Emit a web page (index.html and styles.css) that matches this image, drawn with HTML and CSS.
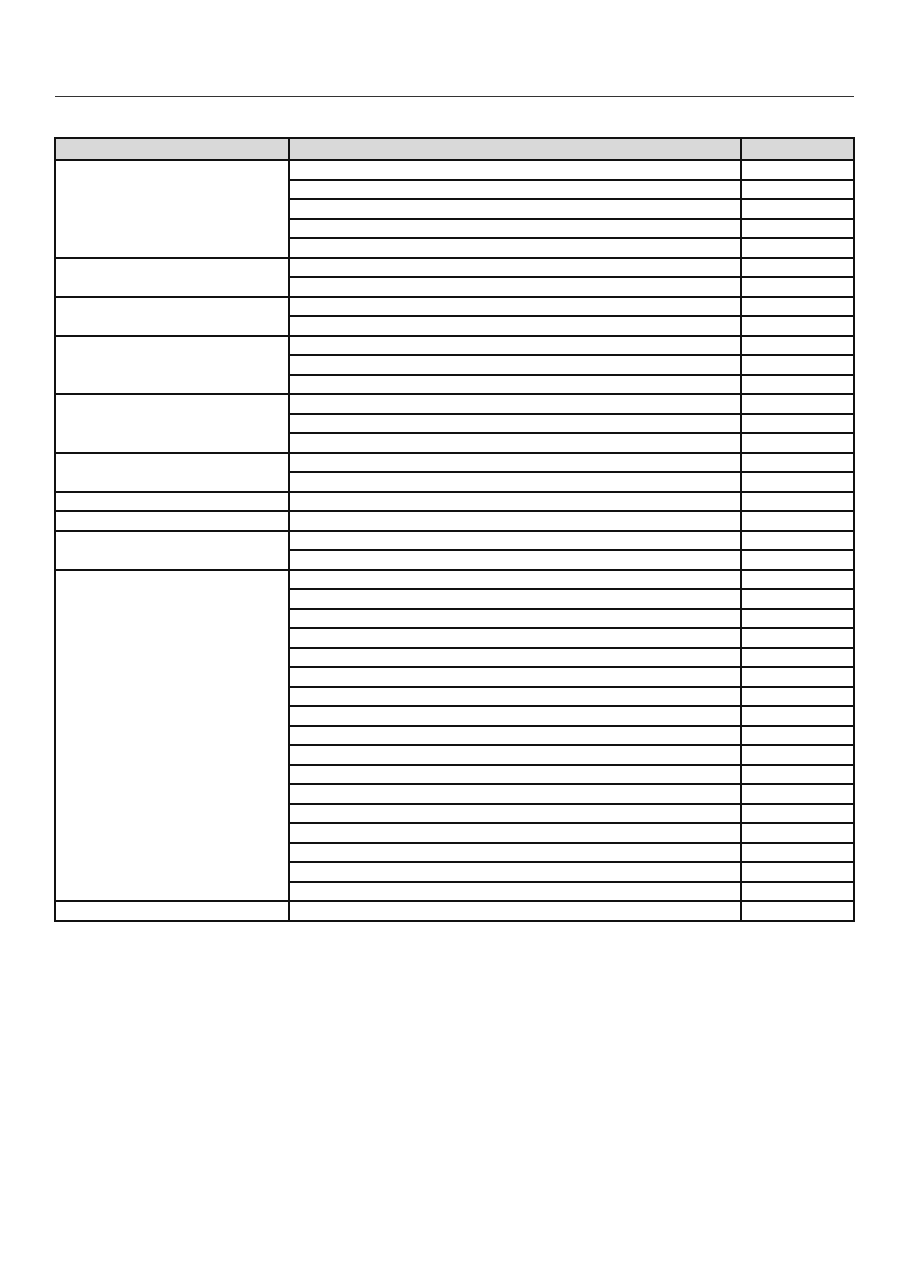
FILE: index.html
```html
<!DOCTYPE html>
<html>
<head>
<meta charset="utf-8">
<link rel="stylesheet" href="styles.css">
</head>
<body>
<div class="page">
  <div class="rule"></div>
  <table class="grid">
    <colgroup><col class="c1"><col class="c2"><col class="c3"></colgroup>
    <thead><tr class="head"><th></th><th></th><th></th></tr></thead>
    <tbody>
      <tr><td rowspan="5"></td><td></td><td></td></tr>
      <tr><td></td><td></td></tr>
      <tr><td></td><td></td></tr>
      <tr><td></td><td></td></tr>
      <tr><td></td><td></td></tr>
      <tr><td rowspan="2"></td><td></td><td></td></tr>
      <tr><td></td><td></td></tr>
      <tr><td rowspan="2"></td><td></td><td></td></tr>
      <tr><td></td><td></td></tr>
      <tr><td rowspan="3"></td><td></td><td></td></tr>
      <tr><td></td><td></td></tr>
      <tr><td></td><td></td></tr>
      <tr><td rowspan="3"></td><td></td><td></td></tr>
      <tr><td></td><td></td></tr>
      <tr><td></td><td></td></tr>
      <tr><td rowspan="2"></td><td></td><td></td></tr>
      <tr><td></td><td></td></tr>
      <tr><td></td><td></td><td></td></tr>
      <tr><td></td><td></td><td></td></tr>
      <tr><td rowspan="2"></td><td></td><td></td></tr>
      <tr><td></td><td></td></tr>
      <tr><td rowspan="17"></td><td></td><td></td></tr>
      <tr><td></td><td></td></tr>
      <tr><td></td><td></td></tr>
      <tr><td></td><td></td></tr>
      <tr><td></td><td></td></tr>
      <tr><td></td><td></td></tr>
      <tr><td></td><td></td></tr>
      <tr><td></td><td></td></tr>
      <tr><td></td><td></td></tr>
      <tr><td></td><td></td></tr>
      <tr><td></td><td></td></tr>
      <tr><td></td><td></td></tr>
      <tr><td></td><td></td></tr>
      <tr><td></td><td></td></tr>
      <tr><td></td><td></td></tr>
      <tr><td></td><td></td></tr>
      <tr><td></td><td></td></tr>
      <tr><td></td><td></td><td></td></tr>
    </tbody>
  </table>
</div>
</body>
</html>
```

FILE: styles.css
```css
html, body {
  margin: 0;
  padding: 0;
  background: #ffffff;
  font-family: "Liberation Sans", Arial, sans-serif;
}
.page {
  padding: 96px 55px 0 54px;
}
.rule {
  height: 0;
  border-top: 1px solid #333333;
  margin-left: 1px;
  width: 799px;
}
.grid {
  margin-top: 40px;
  width: 799px;
  table-layout: fixed;
  border-collapse: collapse;
}
.c1 { width: 234px; }
.c2 { width: 452px; }
.c3 { width: 113px; }
.grid th,
.grid td {
  border: 2px solid #111111;
  padding: 0;
}
.head th {
  background: #d9d9d9;
  height: 20px;
}
.grid tbody tr {
  height: 19.5px;
}
```
